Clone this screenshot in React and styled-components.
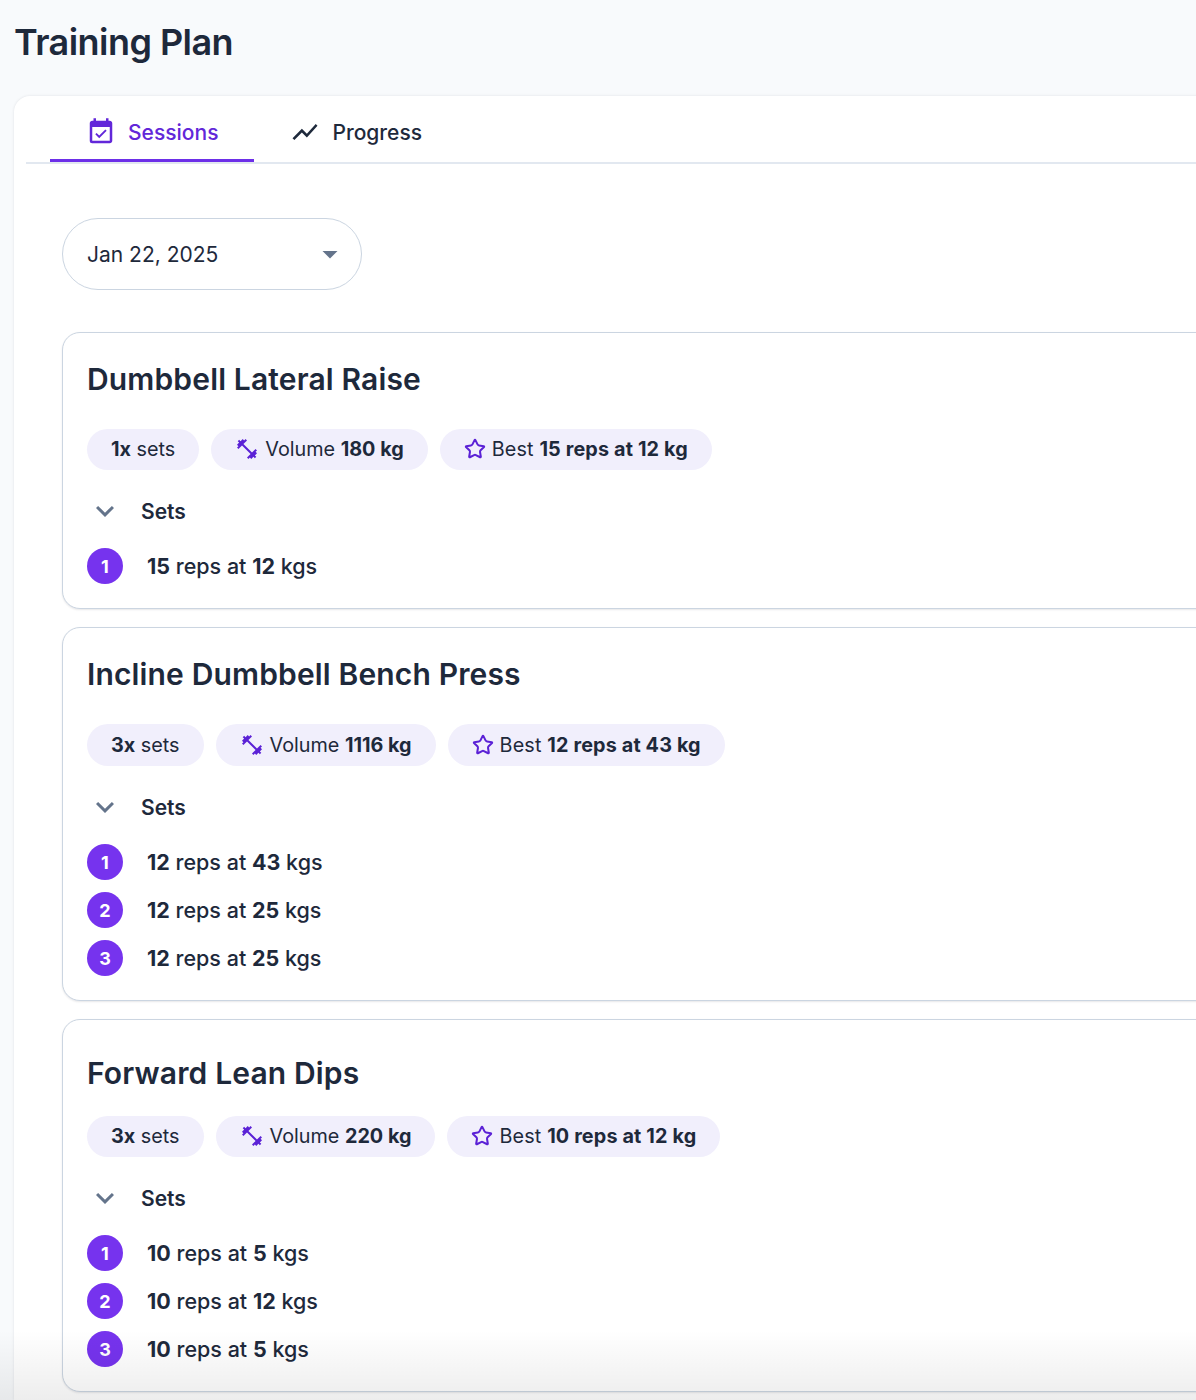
import React from 'react';
import styled, { createGlobalStyle } from 'styled-components';
import { MdEventAvailable, MdShowChart, MdFitnessCenter, MdExpandMore, MdArrowDropDown } from 'react-icons/md';
import { Star } from 'lucide-react';

const exercises = [
  {
    name: 'Dumbbell Lateral Raise',
    count: '1x',
    volume: '180 kg',
    best: '15 reps at 12 kg',
    sets: [{ reps: 15, weight: 12 }],
  },
  {
    name: 'Incline Dumbbell Bench Press',
    count: '3x',
    volume: '1116 kg',
    best: '12 reps at 43 kg',
    tallChips: true,
    sets: [
      { reps: 12, weight: 43 },
      { reps: 12, weight: 25 },
      { reps: 12, weight: 25 },
    ],
  },
  {
    name: 'Forward Lean Dips',
    count: '3x',
    volume: '220 kg',
    best: '10 reps at 12 kg',
    lowTitle: true,
    sets: [
      { reps: 10, weight: 5 },
      { reps: 10, weight: 12 },
      { reps: 10, weight: 5 },
    ],
  },
];

const GlobalStyle = createGlobalStyle`
  html, body {
    margin: 0;
    padding: 0;
    background: #f8fafc;
    overflow: hidden;
  }
  body {
    font-family: Inter, "Liberation Sans", sans-serif;
    color: #1e293b;
  }
`;

const Page = styled.div`
  position: relative;
  height: 1400px;
  width: 1196px;
  overflow: hidden;
  padding: 0 0 0 14px;
  box-sizing: border-box;
`;

const PageTitle = styled.h1`
  margin: 0;
  height: 96px;
  box-sizing: border-box;
  padding: 20px 0 0 0;
  font-size: 36px;
  line-height: 44px;
  font-weight: 600;
  letter-spacing: -0.55px;
  color: #1e293b;
`;

const Panel = styled.div`
  width: 1400px;
  min-height: 1304px;
  box-sizing: border-box;
  background: #fff;
  border-radius: 16px 0 0 0;
  box-shadow: 0 0 3px rgba(15, 23, 42, 0.1);
  padding: 0 0 0 12px;
`;

const TabBar = styled.div`
  display: flex;
  height: 68px;
  box-sizing: border-box;
  padding-left: 24px;
  border-bottom: 2px solid #e2e8f0;
`;

const Tab = styled.div`
  display: flex;
  align-items: center;
  justify-content: center;
  gap: 12px;
  height: 66px;
  padding: 9px 36px 0;
  box-sizing: border-box;
  font-size: 21px;
  font-weight: 500;
  color: ${(p) => (p.$active ? '#6227d9' : '#1e293b')};
  border-bottom: ${(p) => (p.$active ? '3px solid #6d2fe8' : '3px solid transparent')};
  svg {
    flex: none;
  }
`;

const Body = styled.div`
  padding: 54px 0 0 36px;
`;

const DateSelect = styled.div`
  display: flex;
  align-items: center;
  justify-content: space-between;
  width: 300px;
  height: 72px;
  box-sizing: border-box;
  padding: 0 13px 0 24px;
  border: 1px solid #cbd5e1;
  border-radius: 36px;
  font-size: 21px;
  color: #1e293b;
  margin-bottom: 42px;
  svg {
    color: #64748b;
  }
`;

const CardList = styled.div`
  display: flex;
  flex-direction: column;
  gap: 18px;
`;

const Card = styled.div`
  border: 1px solid #cbd5e1;
  border-radius: 18px;
  box-shadow: 0 1px 2px rgba(15, 23, 42, 0.1);
  padding: 24px 24px 24px;
  background: #fff;
`;

const CardTitle = styled.h2`
  margin: 0;
  height: 72px;
  box-sizing: border-box;
  padding-top: ${(p) => (p.$low ? '7px' : '0')};
  font-size: 30px;
  line-height: 44px;
  font-weight: 600;
  letter-spacing: 0.15px;
  color: #1e293b;
`;

const ChipRow = styled.div`
  display: flex;
  gap: 12px;
`;

const Chip = styled.div`
  display: flex;
  align-items: center;
  gap: 6px;
  height: ${(p) => (p.$tall ? '42px' : '41px')};
  padding: 0 24px 1px;
  box-sizing: border-box;
  border-radius: 21px;
  background: #f1effc;
  font-size: 19.8px;
  letter-spacing: ${(p) => p.$tracking || 0}px;
  color: #1e293b;
  white-space: nowrap;
  b {
    font-weight: 700;
  }
  svg {
    flex: none;
    color: #5b21d6;
  }
`;

const SetsHeader = styled.div`
  display: flex;
  align-items: center;
  height: 42px;
  margin: 20px 0 16px;
  font-size: 21px;
  font-weight: 600;
  color: #1e293b;
  svg {
    color: #64748b;
    margin-right: 18px;
  }
`;

const SetList = styled.ul`
  display: flex;
  flex-direction: column;
  gap: 12px;
  margin: 0;
  padding: 0;
  list-style: none;
`;

const SetRow = styled.li`
  display: flex;
  align-items: center;
  gap: 24px;
  height: 36px;
  font-size: 21.5px;
  font-weight: 500;
  color: #1e293b;
  b {
    font-weight: 700;
  }
`;

const SetNumber = styled.span`
  display: flex;
  align-items: center;
  justify-content: center;
  width: 36px;
  height: 36px;
  border-radius: 50%;
  background: #7633ee;
  color: #fff;
  font-size: 18px;
  font-weight: 700;
`;

const BottomFade = styled.div`
  position: absolute;
  left: 0;
  right: 0;
  bottom: 0;
  height: 70px;
  background: linear-gradient(to bottom, rgba(0, 0, 0, 0), rgba(0, 0, 0, 0.07));
  pointer-events: none;
`;

const ExerciseCard = ({ exercise }) => (
  <Card>
    <CardTitle $low={exercise.lowTitle}>{exercise.name}</CardTitle>
    <ChipRow>
      <Chip $tall={exercise.tallChips}>
        <span>
          <b>{exercise.count}</b> sets
        </span>
      </Chip>
      <Chip $tall={exercise.tallChips}>
        <MdFitnessCenter size={24} />
        <span>
          Volume <b>{exercise.volume}</b>
        </span>
      </Chip>
      <Chip $tall={exercise.tallChips} $tracking={0.15}>
        <Star size={22} strokeWidth={2.2} />
        <span>
          Best <b>{exercise.best}</b>
        </span>
      </Chip>
    </ChipRow>
    <SetsHeader>
      <MdExpandMore size={36} />
      Sets
    </SetsHeader>
    <SetList>
      {exercise.sets.map((set, i) => (
        <SetRow key={i}>
          <SetNumber>{i + 1}</SetNumber>
          <span>
            <b>{set.reps}</b> reps at <b>{set.weight}</b> kgs
          </span>
        </SetRow>
      ))}
    </SetList>
  </Card>
);

export default function App() {
  return (
    <Page>
      <GlobalStyle />
      <PageTitle>Training Plan</PageTitle>
      <Panel>
        <TabBar>
          <Tab $active>
            <MdEventAvailable size={30} />
            Sessions
          </Tab>
          <Tab>
            <MdShowChart size={30} />
            Progress
          </Tab>
        </TabBar>
        <Body>
          <DateSelect>
            Jan 22, 2025
            <MdArrowDropDown size={36} />
          </DateSelect>
          <CardList>
            {exercises.map((exercise) => (
              <ExerciseCard key={exercise.name} exercise={exercise} />
            ))}
          </CardList>
        </Body>
      </Panel>
      <BottomFade />
    </Page>
  );
}
